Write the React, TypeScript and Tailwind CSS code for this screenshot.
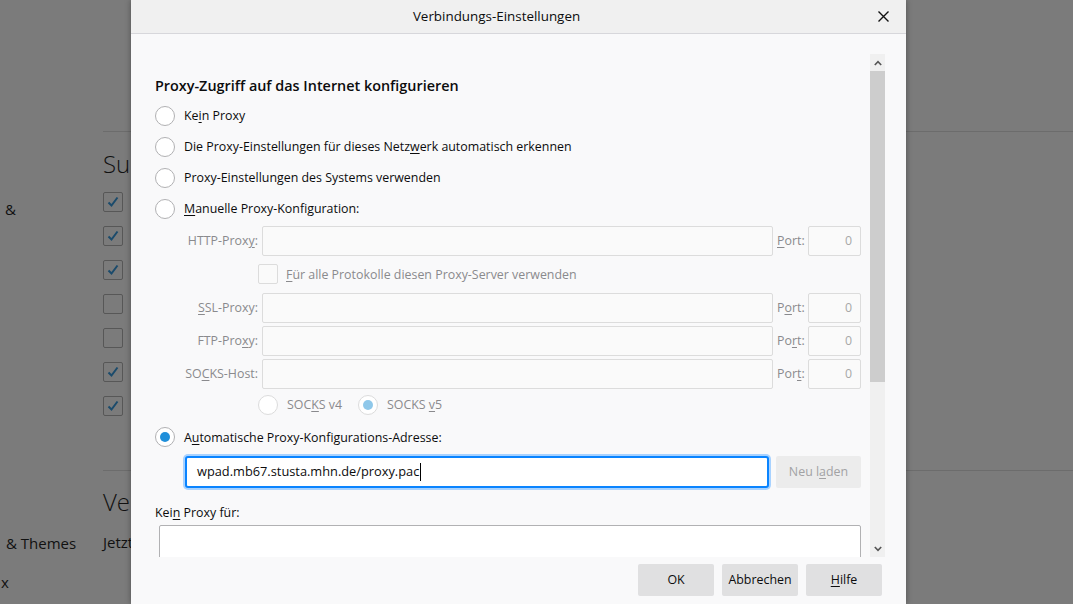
import React from 'react';

const font = { fontFamily: '"Open Sans", "Noto Sans", Arial, sans-serif' };

function Radio({ checked, disabled }: { checked?: boolean; disabled?: boolean }) {
  return (
    <span
      className={`flex h-[20px] w-[20px] shrink-0 items-center justify-center rounded-full border bg-white ${
        disabled ? 'border-[#dcdcdc]' : 'border-[#b1b1b3]'
      }`}
    >
      {checked && (
        <span className={`h-[10px] w-[10px] rounded-full ${disabled ? 'bg-[#8fc8ea]' : 'bg-[#1f8fda]'}`} />
      )}
    </span>
  );
}

function Key({ children }: { children: React.ReactNode }) {
  return <span className="underline decoration-1 underline-offset-2">{children}</span>;
}

function ProxyRow({ label, port }: { label: React.ReactNode; port: React.ReactNode }) {
  return (
    <div className="flex h-[30px] items-center gap-[4px] text-[#8a8a8d]">
      <div className="w-[103px] text-right">{label}</div>
      <div className="h-full flex-1 rounded-[2px] border border-[#dcdcdc] bg-[#fafafa]" />
      <div className="w-[27px]">{port}</div>
      <div className="flex h-full w-[53px] items-center justify-end rounded-[2px] border border-[#dcdcdc] bg-[#fafafa] pr-[8px] text-[#a8a8a8]">
        0
      </div>
    </div>
  );
}

function BgCheck({ on }: { on?: boolean }) {
  return (
    <div className="flex h-[20px] w-[20px] items-center justify-center rounded-[2px] border border-[#575757]">
      {on && (
        <svg width="14" height="14" viewBox="0 0 14 14">
          <path d="M2.5 7.5 L5.5 10.5 L11.5 2.5" fill="none" stroke="#1b4b6c" strokeWidth="2" />
        </svg>
      )}
    </div>
  );
}

export default function App() {
  return (
    <div className="relative h-[604px] w-[1073px] overflow-hidden bg-[#7b7b7b] text-[12.4px] text-[#0c0c0d]" style={font}>
      {/* dimmed preferences page behind the dialog */}
      <div className="flex h-full text-[#111]">
        <div className="w-[103px] shrink-0 text-[15px]">
          <div className="ml-[5px] mt-[198px]">&amp;</div>
          <div className="ml-[6px] mt-[311px] whitespace-nowrap">&amp; Themes</div>
          <div className="ml-[1px] mt-[17px]">x</div>
        </div>
        <div className="flex-1">
          <div className="mt-[131px] h-px bg-[#6c6c6c]" />
          <div className="mt-[17px] text-[24px] font-light leading-[30px]">Sur</div>
          <div className="mt-[13px] flex flex-col gap-[14px]">
            <BgCheck on />
            <BgCheck on />
            <BgCheck on />
            <BgCheck />
            <BgCheck />
            <BgCheck on />
            <BgCheck on />
          </div>
          <div className="mt-[54px] h-px bg-[#6c6c6c]" />
          <div className="mt-[16px] text-[24px] font-light leading-[30px]">Ver</div>
          <div className="mt-[14px] text-[15px]">Jetzt</div>
        </div>
      </div>

      {/* dialog */}
      <div className="absolute left-[131px] top-0 flex h-[604px] w-[775px] flex-col bg-[#f9f9fa] shadow-[0_0_6px_rgba(0,0,0,0.35)]">
        <div className="relative flex h-[34px] shrink-0 items-center justify-center border-b border-[#d7d7db] bg-[#f0f0f0] pr-[44px]">
          <span className="text-[13.4px] font-medium">Verbindungs-Einstellungen</span>
          <svg className="absolute right-[17px] top-[11px]" width="11" height="11" viewBox="0 0 11 11">
            <path d="M0.5 0.5 L10.5 10.5 M10.5 0.5 L0.5 10.5" stroke="#111" strokeWidth="1.4" />
          </svg>
        </div>

        <div className="flex min-h-0 flex-1">
          <div className="w-[730px] shrink-0 overflow-hidden pl-[24px]">
            <div className="mt-[42px] text-[14.4px] font-semibold leading-[20px]">Proxy-Zugriff auf das Internet konfigurieren</div>
            <div className="mt-[4px]">
              <div className="flex h-[31px] items-center gap-[9px]">
                <Radio />
                <span className="pt-[2px]">
                  Ke<Key>i</Key>n Proxy
                </span>
              </div>
              <div className="flex h-[31px] items-center gap-[9px]">
                <Radio />
                <span className="pt-[2px]">
                  Die Proxy-Einstellungen für dieses Netz<Key>w</Key>erk automatisch erkennen
                </span>
              </div>
              <div className="flex h-[31px] items-center gap-[9px]">
                <Radio />
                <span className="pt-[2px]">Proxy-Einstellungen des Systems verwenden</span>
              </div>
              <div className="flex h-[31px] items-center gap-[9px]">
                <Radio />
                <span className="pt-[2px]">
                  <Key>M</Key>anuelle Proxy-Konfiguration:
                </span>
              </div>
            </div>

            <div className="mt-[2px] w-[706px]">
              <ProxyRow
                label={
                  <>
                    HTTP-Prox<Key>y</Key>:
                  </>
                }
                port={
                  <>
                    <Key>P</Key>ort:
                  </>
                }
              />
              <div className="flex h-[35px] items-center gap-[8px] pl-[103px] pt-[1px] text-[#8a8a8d]">
                <span className="h-[20px] w-[20px] rounded-[2px] border border-[#dcdcdc] bg-[#fafafa]" />
                <span className="pt-[2px]">
                  <Key>F</Key>ür alle Protokolle diesen Proxy-Server verwenden
                </span>
              </div>
              <div className="mt-[2px] flex flex-col gap-[3px]">
                <ProxyRow
                  label={
                    <>
                      <Key>S</Key>SL-Proxy:
                    </>
                  }
                  port={
                    <>
                      P<Key>o</Key>rt:
                    </>
                  }
                />
                <ProxyRow
                  label={
                    <>
                      FTP-Pro<Key>x</Key>y:
                    </>
                  }
                  port={
                    <>
                      Po<Key>r</Key>t:
                    </>
                  }
                />
                <ProxyRow
                  label={
                    <>
                      SO<Key>C</Key>KS-Host:
                    </>
                  }
                  port={
                    <>
                      Por<Key>t</Key>:
                    </>
                  }
                />
              </div>
              <div className="flex h-[32px] items-center pl-[103px] text-[#8a8a8d]">
                <Radio disabled />
                <span className="ml-[9px] w-[71px]">
                  SOC<Key>K</Key>S v4
                </span>
                <Radio checked disabled />
                <span className="ml-[9px]">
                  SOCKS <Key>v</Key>5
                </span>
              </div>
            </div>

            <div className="flex h-[32px] items-center gap-[9px]">
              <Radio checked />
              <span className="pt-[2px]">
                A<Key>u</Key>tomatische Proxy-Konfigurations-Adresse:
              </span>
            </div>
            <div className="mt-[3px] flex w-[706px] items-center gap-[7px] pl-[30px]">
              <div className="flex h-[32px] flex-1 items-center rounded-[3px] border-2 border-[#0a84ff] bg-white pl-[10px] text-[12.8px] shadow-[0_0_0_2px_#a8d2ff]">
                wpad.mb67.stusta.mhn.de/proxy.pac
                <span className="ml-px h-[18px] w-px bg-[#000]" />
              </div>
              <div className="flex h-[32px] w-[85px] items-center justify-center rounded-[2px] bg-[#ececec] text-[#a2a2a4]">
                Neu l<Key>a</Key>den
              </div>
            </div>
            <div className="mt-[15px] leading-[20px]">
              Kei<Key>n</Key> Proxy für:
            </div>
            <div className="ml-[4px] mt-[2px] h-[60px] w-[702px] rounded-[2px] border border-[#b1b1b3] bg-white" />
          </div>

          <div className="ml-[9px] mt-[20px] flex w-[15px] flex-col bg-[#f0f0f0]">
            <div className="flex h-[17px] items-center justify-center">
              <svg width="8" height="6" viewBox="0 0 8 6">
                <path d="M0.8 5 L4 1.6 L7.2 5" fill="none" stroke="#555" strokeWidth="1.6" />
              </svg>
            </div>
            <div className="h-[311px] bg-[#cdcdcd]" />
            <div className="flex-1" />
            <div className="flex h-[17px] items-center justify-center">
              <svg width="8" height="6" viewBox="0 0 8 6">
                <path d="M0.8 1 L4 4.4 L7.2 1" fill="none" stroke="#555" strokeWidth="1.6" />
              </svg>
            </div>
          </div>
        </div>

        <div className="flex h-[47px] shrink-0 justify-end gap-[8px] pr-[24px] pt-[7px]">
          <div className="flex h-[32px] w-[76px] items-center justify-center rounded-[2px] bg-[#e0e0e1]">OK</div>
          <div className="flex h-[32px] w-[76px] items-center justify-center rounded-[2px] bg-[#e0e0e1]">Abbrechen</div>
          <div className="flex h-[32px] w-[76px] items-center justify-center rounded-[2px] bg-[#e0e0e1]">
            <Key>H</Key>ilfe
          </div>
        </div>
      </div>
    </div>
  );
}
